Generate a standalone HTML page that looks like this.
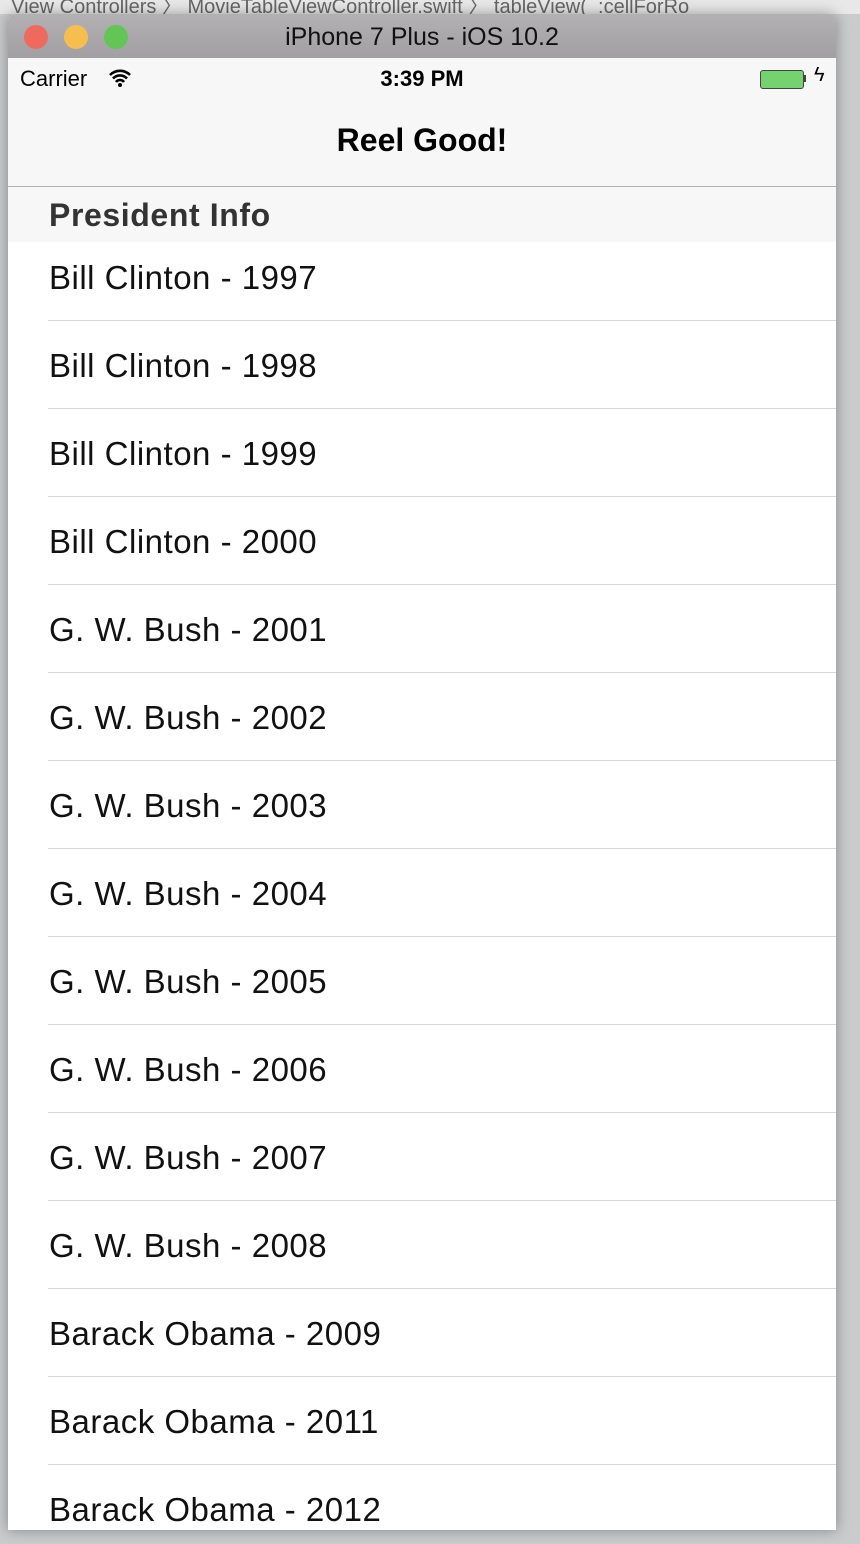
<!DOCTYPE html>
<html><head><meta charset="utf-8"><style>
html,body{margin:0;padding:0;}
body{width:860px;height:1544px;position:relative;overflow:hidden;background:#c9cbcd;font-family:"Liberation Sans",sans-serif;}
.bg{position:absolute;left:0;top:0;width:860px;height:14px;background:#e8e8e8;color:#666;font-size:20px;line-height:14px;overflow:hidden;white-space:nowrap;}
.win{position:absolute;left:8px;top:14px;width:828px;height:1516px;background:#fff;border-radius:8px 8px 0 0;overflow:hidden;box-shadow:0 0 14px rgba(0,0,0,.35);}
.title{position:absolute;left:0;top:0;width:828px;height:44px;background:linear-gradient(#b3b1b3,#a19fa1);text-align:center;font-size:25px;line-height:46px;color:#111;}
.dot{position:absolute;top:11px;width:24px;height:24px;border-radius:50%;}
.status{position:absolute;top:44px;left:0;width:828px;height:128px;background:#f7f7f7;border-bottom:1px solid #b2b2b2;}
.hdr{position:absolute;top:173px;left:0;width:828px;height:55px;background:#f7f7f7;font-size:32px;font-weight:bold;color:#333;line-height:56px;padding-left:41px;box-sizing:border-box;z-index:2;letter-spacing:0.6px;}
.row{position:absolute;left:0;width:828px;height:88px;font-size:33px;color:#111;letter-spacing:0.5px;}
.row span{position:absolute;left:41px;top:27px;}
.row i{position:absolute;left:40px;right:0;bottom:-1px;height:1px;background:#d8d8d8;}
</style></head><body>
<div class="bg">&nbsp;&nbsp;View Controllers 〉 MovieTableViewController.swift 〉 tableView(_:cellForRo</div>
<div class="win">
<div class="title">iPhone 7 Plus - iOS 10.2
<div class="dot" style="left:16px;background:#ee6a5f"></div>
<div class="dot" style="left:56px;background:#f5be4f"></div>
<div class="dot" style="left:96px;background:#62c655"></div>
</div>
<div class="status">
<div style="position:absolute;left:12px;top:8px;font-size:22px;">Carrier</div>
<svg style="position:absolute;left:100px;top:10px" width="24" height="20" viewBox="0 0 24 20"><path d="M2 7a14 14 0 0 1 20 0M5 10.5a9.5 9.5 0 0 1 14 0M8 14a5 5 0 0 1 8 0" stroke="#000" stroke-width="2.6" fill="none"/><circle cx="12" cy="17" r="2" fill="#000"/></svg>
<div style="position:absolute;left:0;width:828px;text-align:center;top:8px;font-size:22px;font-weight:bold;">3:39 PM</div>
<div style="position:absolute;left:752px;top:12px;width:42px;height:17px;border:1px solid #444;border-radius:3px;background:#74d36e;"></div>
<div style="position:absolute;left:796px;top:17px;width:2px;height:7px;background:#444;"></div>
<div style="position:absolute;left:806px;top:6px;font-size:20px;">ϟ</div>
<div style="position:absolute;left:0;width:828px;text-align:center;top:64px;font-size:32px;font-weight:bold;">Reel Good!</div>
</div>
<div class="hdr">President Info</div>
<div class="row" style="top:218px"><span>Bill Clinton - 1997</span><i></i></div>
<div class="row" style="top:306px"><span>Bill Clinton - 1998</span><i></i></div>
<div class="row" style="top:394px"><span>Bill Clinton - 1999</span><i></i></div>
<div class="row" style="top:482px"><span>Bill Clinton - 2000</span><i></i></div>
<div class="row" style="top:570px"><span>G. W. Bush - 2001</span><i></i></div>
<div class="row" style="top:658px"><span>G. W. Bush - 2002</span><i></i></div>
<div class="row" style="top:746px"><span>G. W. Bush - 2003</span><i></i></div>
<div class="row" style="top:834px"><span>G. W. Bush - 2004</span><i></i></div>
<div class="row" style="top:922px"><span>G. W. Bush - 2005</span><i></i></div>
<div class="row" style="top:1010px"><span>G. W. Bush - 2006</span><i></i></div>
<div class="row" style="top:1098px"><span>G. W. Bush - 2007</span><i></i></div>
<div class="row" style="top:1186px"><span>G. W. Bush - 2008</span><i></i></div>
<div class="row" style="top:1274px"><span>Barack Obama - 2009</span><i></i></div>
<div class="row" style="top:1362px"><span>Barack Obama - 2011</span><i></i></div>
<div class="row" style="top:1450px"><span>Barack Obama - 2012</span><i></i></div>
</div>
</body></html>
